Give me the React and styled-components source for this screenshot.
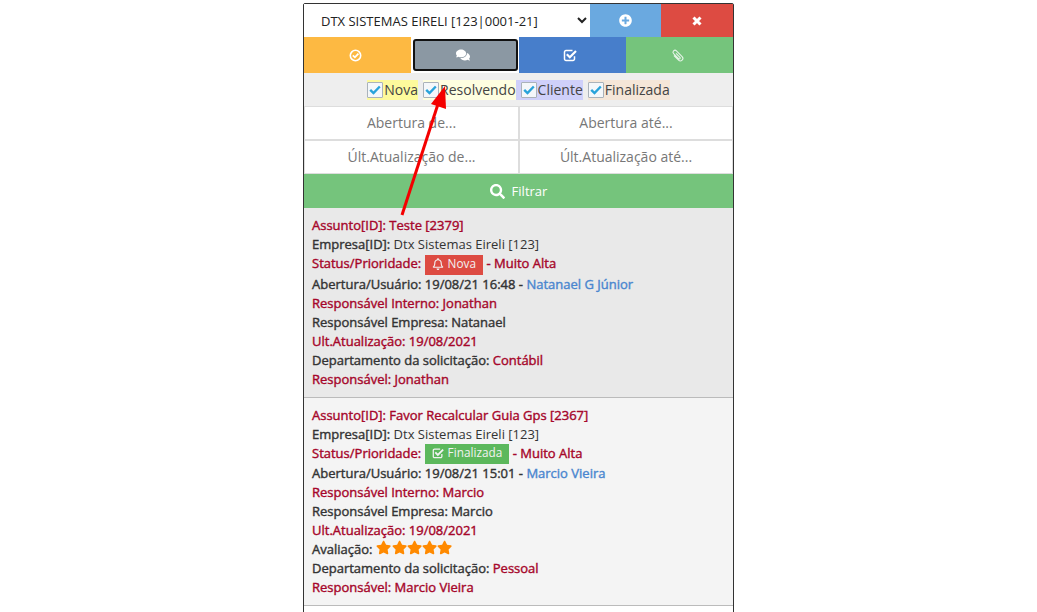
import React from "react";
import styled, { createGlobalStyle } from "styled-components";
import { FaPlusCircle, FaComments, FaSearch, FaRegBell, FaStar } from "react-icons/fa";

const Global = createGlobalStyle`
  html, body { margin: 0; padding: 0; background: #fff; height: 612px; overflow: hidden; }
  body { font-family: "Open Sans", sans-serif; }
  * { box-sizing: border-box; }
`;
const Page = styled.div`
  position: relative;
  width: 1037px;
  height: 612px;
  padding: 3px 0 0 303px;
  overflow: hidden;
`;
const Panel = styled.main`
  width: 431px;
  height: 640px;
  border: 1px solid #333;
  border-radius: 2px 2px 0 0;
`;
const TopBar = styled.div`
  display: grid;
  grid-template-columns: 286px 71px 72px;
  height: 33px;
`;
const CompanySelect = styled.select`
  border: 0;
  background: #fff;
  color: #222;
  font: 400 13px "Open Sans", sans-serif;
  padding: 0 0 0 13px;
  outline: 0;
  height: 33px;
`;
const Action = styled.button`
  border: 0;
  padding: 0;
  color: #fff;
  background: ${(p) => p.$bg};
  display: flex;
  align-items: center;
  justify-content: center;
  font-size: 13px;
`;
const Tabs = styled.div`
  display: grid;
  grid-template-columns: 107px 108px 107px 107px;
  height: 36px;
`;
const Tab = styled(Action)`
  padding-right: 5px;
  ${(p) => p.$focus && "border: 2px solid #111; border-radius: 3px; margin: 2px 1px 2px 2px; box-shadow: 0 0 0 1px #fff;"}
`;
const Legend = styled.div`
  height: 33px;
  background: #eee;
  display: flex;
  justify-content: center;
  align-items: center;
`;
const Chip = styled.label`
  display: flex;
  align-items: center;
  height: 20px;
  background: ${(p) => p.$bg};
  color: #444;
  font-size: 14px;
  margin-right: ${(p) => p.$gap || 0}px;
  padding-left: ${(p) => p.$pad || 0}px;
`;
const Box = styled.span`
  width: 16px;
  height: 16px;
  background: #f4f7fa;
  border: 1px solid #aab2ba;
  border-radius: 1px;
  display: flex;
  align-items: center;
  justify-content: center;
  margin-right: 1px;
`;
const DateGrid = styled.div`
  display: grid;
  grid-template-columns: 215px 214px;
  grid-auto-rows: 34px;
`;
const DateField = styled.div`
  border: 1px solid #ddd;
  display: flex;
  align-items: center;
  justify-content: center;
  font-size: 14px;
  color: #777;
  background: #fff;
  padding-bottom: 1px;
`;
const FilterBar = styled.div`
  height: 34px;
  background: #75c47c;
  color: #fff;
  display: flex;
  align-items: center;
  justify-content: center;
  gap: 7px;
  font-size: 13px;
  & svg { font-size: 15px; }
`;
const Card = styled.article`
  background: ${(p) => p.$bg};
  border-bottom: 1px solid #bbb;
  padding: 8px;
`;
const Row = styled.div`
  height: ${(p) => p.$h || 19}px;
  font-size: 13px;
  line-height: 19px;
  font-weight: 400;
  -webkit-text-stroke: 0.4px currentColor;
  white-space: nowrap;
  color: ${(p) => (p.$red ? "#a6062a" : "#333")};
  display: flex;
  align-items: flex-start;
`;
const Text = styled.span`
  white-space: pre;
  color: ${(p) => p.$c || "inherit"};
  ${(p) => p.$plain && "-webkit-text-stroke: 0;"}
`;
const Badge = styled.span`
  display: inline-flex;
  align-items: center;
  gap: 4px;
  height: 20px;
  padding: 0 7px 3px;
  margin-top: ${(p) => p.$mt}px;
  background: ${(p) => p.$bg};
  color: #f2f2f2;
  font-size: 11.8px;
  -webkit-text-stroke: 0;
  & svg { font-size: 12px; }
`;
const Stars = styled.span`
  display: inline-flex;
  color: #ff8a00;
  font-size: 15.2px;
  margin-left: 4px;
`;
const ArrowLayer = styled.svg`
  position: absolute;
  inset: 0;
  pointer-events: none;
`;

const CrossIcon = () => (
  <svg width="10" height="10" viewBox="0 0 10 10">
    <path d="M1.5 1.5 8.5 8.5M8.5 1.5 1.5 8.5" stroke="#fff" strokeWidth="3" />
  </svg>
);
const CheckCircleIcon = () => (
  <svg width="13" height="13" viewBox="0 0 13 13" fill="none" stroke="#fff">
    <circle cx="6.5" cy="6.5" r="5.2" strokeWidth="1.6" />
    <path d="M3.8 6.3 5.9 8.3 9.4 4.6" strokeWidth="1.8" />
  </svg>
);
const CheckSquareIcon = ({ size = 14, color = "#fff" }) => (
  <svg width={size} height={size} viewBox="0 0 14 14" fill="none" stroke={color}>
    <path d="M11.5 8.2V11a1.5 1.5 0 0 1-1.5 1.5H3A1.5 1.5 0 0 1 1.5 11V4A1.5 1.5 0 0 1 3 2.5H9.5" strokeWidth="1.5" />
    <path d="M3.8 6.3 6.8 9.2 13 3" strokeWidth="2.2" />
  </svg>
);
const TickIcon = () => (
  <svg width="12" height="10" viewBox="0 0 12 10" fill="none" stroke="#29a3da">
    <path d="M1.2 4.8 4.5 8 10.800 1.500" strokeWidth="2.4" />
  </svg>
);
const ClipIcon = () => (
  <svg width="15" height="15" viewBox="0 0 15 15" fill="none" stroke="#e4f3e6" strokeWidth="1.1">
    <g transform="rotate(-45 7.5 7.500)">
      <path d="M5 5V11.500a2.500 2.500 0 0 0 5 0V3.500a2 2 0 0 0-4 0V10.500a1 1 0 0 0 2 0V5" />
    </g>
  </svg>
);

const chips = [
  ["Nova", "#fdfa9c", 5, 0],
  ["Resolvendo", "#fefee0", 0, 0],
  ["Cliente", "#cfd0fa", 5, 5],
  ["Finalizada", "#f5e6d8", 0, 0],
];

const RED = "#a6062a";
const BLUE = "#4a86cf";

export default function App() {
  return (
    <Page>
      <Global />
      <Panel>
        <TopBar>
          <CompanySelect defaultValue="dtx">
            <option value="dtx">DTX SISTEMAS EIRELI [123|0001-21]</option>
          </CompanySelect>
          <Action $bg="#6aa9e0"><FaPlusCircle /></Action>
          <Action $bg="#dd4b42"><CrossIcon /></Action>
        </TopBar>
        <Tabs>
          <Tab $bg="#fdb942"><CheckCircleIcon /></Tab>
          <Tab $bg="#8b98a3" $focus><FaComments size={14} /></Tab>
          <Tab $bg="#477ecb"><CheckSquareIcon /></Tab>
          <Tab $bg="#75c47c"><ClipIcon /></Tab>
        </Tabs>
        <Legend>
          {chips.map(([name, bg, gap, pad]) => (
            <Chip key={name} $bg={bg} $gap={gap} $pad={pad}>
              <Box><TickIcon /></Box>
              {name}
            </Chip>
          ))}
        </Legend>
        <DateGrid>
          <DateField>Abertura de...</DateField>
          <DateField>Abertura até...</DateField>
          <DateField>Últ.Atualização de...</DateField>
          <DateField>Últ.Atualização até...</DateField>
        </DateGrid>
        <FilterBar><FaSearch />Filtrar</FilterBar>
        <Card $bg="#e9e9e9">
          <Row $red>Assunto[ID]: Teste [2379]</Row>
          <Row><Text>Empresa[ID]: </Text><Text $plain>Dtx Sistemas Eireli [123]</Text></Row>
          <Row $red $h={21}>
            <Text>Status/Prioridade: </Text>
            <Badge $bg="#dd4b42" $mt={1}><FaRegBell />Nova</Badge>
            <Text> - Muito Alta</Text>
          </Row>
          <Row><Text>Abertura/Usuário: 19/08/21 16:48 - </Text><Text $c={BLUE}>Natanael G Júnior</Text></Row>
          <Row $red>Responsável Interno: Jonathan</Row>
          <Row>Responsável Empresa: Natanael</Row>
          <Row $red>Ult.Atualização: 19/08/2021</Row>
          <Row><Text>Departamento da solicitação: </Text><Text $c={RED}>Contábil</Text></Row>
          <Row $red>Responsável: Jonathan</Row>
        </Card>
        <Card $bg="#f4f4f4">
          <Row $red>Assunto[ID]: Favor Recalcular Guia Gps [2367]</Row>
          <Row><Text>Empresa[ID]: </Text><Text $plain>Dtx Sistemas Eireli [123]</Text></Row>
          <Row $red $h={20}>
            <Text>Status/Prioridade: </Text>
            <Badge $bg="#5cb85c" $mt={0}><CheckSquareIcon size={12} color="#f2f2f2" />Finalizada</Badge>
            <Text> - Muito Alta</Text>
          </Row>
          <Row><Text>Abertura/Usuário: 19/08/21 15:01 - </Text><Text $c={BLUE}>Marcio Vieira</Text></Row>
          <Row $red>Responsável Interno: Marcio</Row>
          <Row>Responsável Empresa: Marcio</Row>
          <Row $red>Ult.Atualização: 19/08/2021</Row>
          <Row>
            <Text>Avaliação:</Text>
            <Stars>{[0, 1, 2, 3, 4].map((i) => <FaStar key={i} />)}</Stars>
          </Row>
          <Row><Text>Departamento da solicitação: </Text><Text $c={RED}>Pessoal</Text></Row>
          <Row $red>Responsável: Marcio Vieira</Row>
        </Card>
      </Panel>
      <ArrowLayer width="1037" height="612" viewBox="0 0 1037 612">
        <line x1="402" y1="215" x2="438" y2="104" stroke="#f40000" strokeWidth="3" />
        <polygon points="445,86 431,104 446,109" fill="#f40000" />
      </ArrowLayer>
    </Page>
  );
}
